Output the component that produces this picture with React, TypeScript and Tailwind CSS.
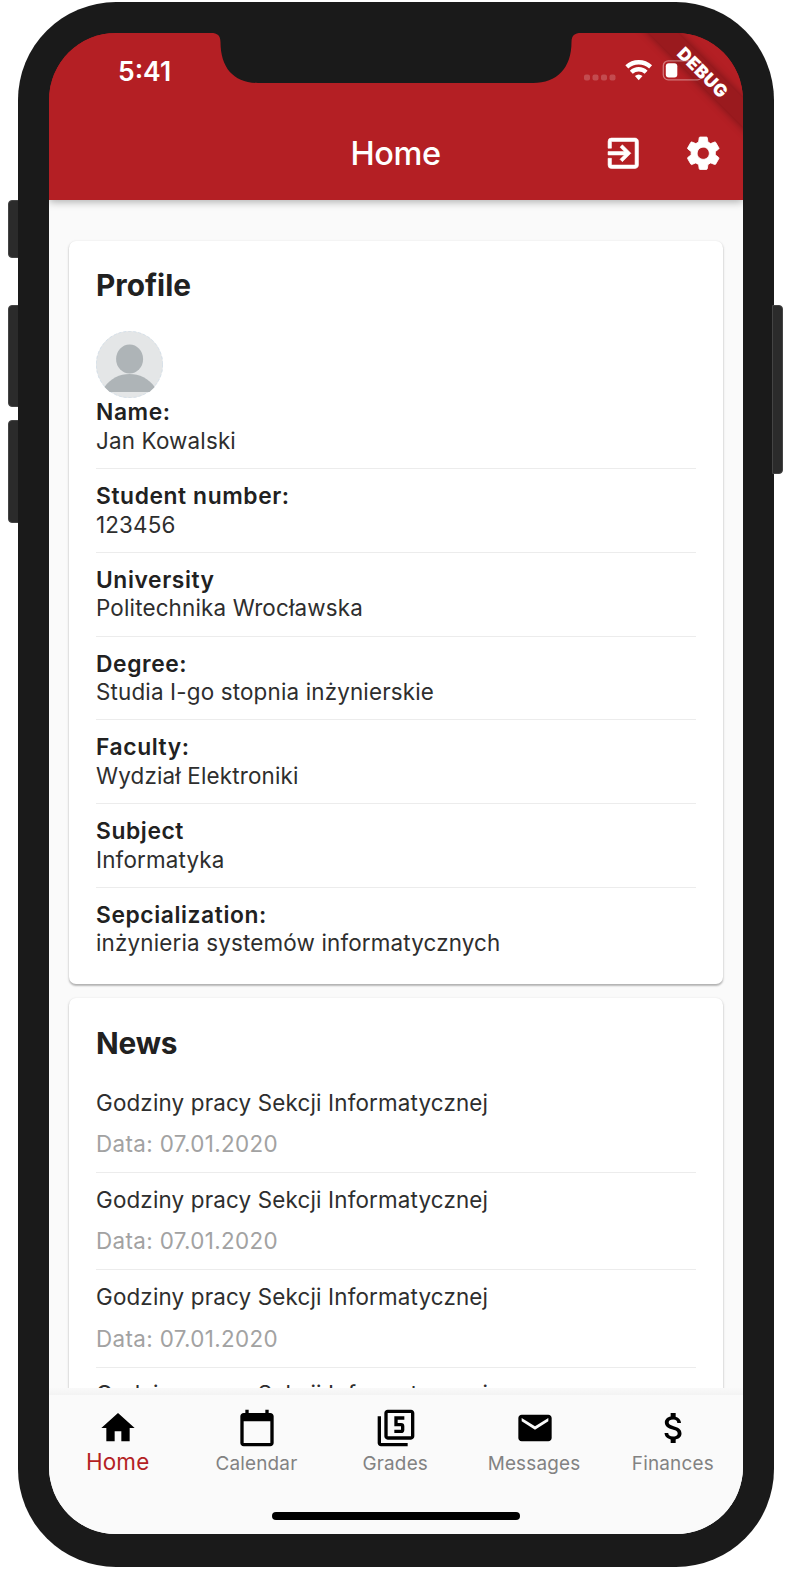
import React from "react";
import {
  MdHome,
  MdCalendarToday,
  MdFilter5,
  MdMail,
  MdAttachMoney,
  MdExitToApp,
  MdSettings,
} from "react-icons/md";

const profile = [
  ["Name:", "Jan Kowalski"],
  ["Student number:", "123456"],
  ["University", "Politechnika Wrocławska"],
  ["Degree:", "Studia I-go stopnia inżynierskie"],
  ["Faculty:", "Wydział Elektroniki"],
  ["Subject", "Informatyka"],
  ["Sepcialization:", "inżynieria systemów informatycznych"],
];

const news = [0, 1, 2, 3].map((id) => ({
  id,
  title: "Godziny pracy Sekcji Informatycznej",
  date: "Data: 07.01.2020",
}));

const tabs = [
  { label: "Home", Icon: MdHome },
  { label: "Calendar", Icon: MdCalendarToday },
  { label: "Grades", Icon: MdFilter5 },
  { label: "Messages", Icon: MdMail },
  { label: "Finances", Icon: MdAttachMoney },
];

function StatusBar() {
  return (
    <div className="flex h-[74px] items-center justify-between pt-[3px] pl-[69px]">
      <span className="text-[26.500px] font-semibold leading-none text-white">5:41</span>
      <svg className="h-[26px] w-[160px]" viewBox="583 59.500 160 26" fill="none">
        <g fill="#fff" fillOpacity="0.2">
          <rect x="584" y="75" width="6" height="6" rx="2" />
          <rect x="592.5" y="75" width="6" height="6" rx="2" />
          <rect x="601" y="75" width="6" height="6" rx="2" />
          <rect x="609.5" y="75" width="6" height="6" rx="2" />
        </g>
        <path
          d="M626.800 67.400a17.500 17.500 0 0 1 23.800 0M631.300 72.700a10.800 10.800 0 0 1 14.800 0"
          stroke="#fff"
          strokeWidth="4.300"
        />
        <path d="M634.900 76.600a5.700 5.700 0 0 1 7.600 0l-3.800 4.200z" fill="#fff" />
        <rect x="663.300" y="61.300" width="39" height="19" rx="5" stroke="#fff" strokeOpacity="0.4" strokeWidth="1.300" />
        <rect x="665.800" y="63.700" width="11.500" height="14.300" rx="3" fill="#fff" />
      </svg>
    </div>
  );
}

function Notch() {
  return (
    <svg className="absolute top-[-1px] left-[160px] h-[52px] w-[374px]" viewBox="209 32 374 52">
      <path
        d="M209 32V33H211C217.500 33 220.300 35.500 220.500 42C220.500 68 234 83 258 83H533C557 83 571.500 68 571.500 42C571.700 35.500 574.500 33 581 33H583V32Z"
        fill="#1a1a1a"
      />
    </svg>
  );
}

function SideButton({ className }: { className: string }) {
  return <div className={"absolute w-[11px] border border-[#444] bg-[#2b2b2b] " + className} />;
}

export default function App() {
  return (
    <div className="relative h-[1569px] w-[792px] overflow-hidden bg-white pt-[1.500px] pl-[18px] font-['Inter',sans-serif] text-[#212121]">
      <SideButton className="top-[200px] left-[8px] h-[58px] rounded-l-[4px]" />
      <SideButton className="top-[305px] left-[8px] h-[102px] rounded-l-[4px]" />
      <SideButton className="top-[420px] left-[8px] h-[103px] rounded-l-[4px]" />
      <div className="relative h-[1565px] w-[756px] rounded-[98px] bg-[#1a1a1a] pt-[31.500px] pl-[31px]">
        <div className="relative flex h-[1501px] w-[694px] flex-col overflow-hidden rounded-[67px] bg-[linear-gradient(#b41f24_160px,#fafafa_160px)]">
          <header className="relative z-10 h-[167.400px] shrink-0 bg-[#b41f24] shadow-[0_2px_8px_rgba(0,0,0,0.3)]">
            <div className="absolute top-[28.500px] left-[564px] flex h-[21px] w-[180px] rotate-45 items-center justify-center bg-[#9a1a1e] shadow-[0_0_9px_rgba(0,0,0,0.35)]">
              <span className="pt-[1px] text-[17.500px] font-black leading-none tracking-[0.500px] text-white">DEBUG</span>
            </div>
            <div className="relative">
              <StatusBar />
            </div>
            <Notch />
            <div className="grid grid-cols-[1fr_auto_1fr] items-center pt-[25.500px]">
              <span />
              <h1 className="pt-[0.500px] pr-[1px] text-[32.500px] font-medium leading-[41px] tracking-[-0.400px] text-white">Home</h1>
              <div className="flex justify-end gap-[39.500px] pr-[20px] text-[40.500px] text-white">
                <MdExitToApp className="[&>path:last-child]:stroke-white [&>path:last-child]:[stroke-width:0.35]" />
                <MdSettings className="[&>path:last-child]:stroke-white [&>path:last-child]:[stroke-width:0.5]" />
              </div>
            </div>
          </header>

          <main className="flex min-h-0 flex-1 flex-col gap-[13.700px] overflow-hidden bg-[#fafafa] px-[20px] pt-[40.300px]">
            <section className="h-[743.700px] shrink-0 rounded-[7px] bg-white px-[27px] pt-[26px] shadow-[0_1.700px_1.700px_rgba(0,0,0,0.2),0_1px_3px_rgba(0,0,0,0.16)]">
              <h2 className="text-[29.800px] font-bold leading-[37px]">Profile</h2>
              <svg className="mt-[27px] h-[67px] w-[67px]" viewBox="0 0 67 67">
                <circle cx="33.500" cy="33.500" r="33.500" fill="#e4e6e7" />
                <circle cx="33.500" cy="33.500" r="33.200" fill="none" stroke="#cddbe8" strokeWidth="0.700" strokeDasharray="3 2" />
                <ellipse cx="33.600" cy="28" rx="13.500" ry="14.500" fill="#aeb4b7" />
                <path d="M8.500 56C20 38.500 47 38.500 58.700 56L53.500 61H13.700Z" fill="#aeb4b7" />
              </svg>
              {profile.map(([label, value], i) => (
                <div
                  key={label}
                  className={
                    i === profile.length - 1
                      ? "pt-[13px] leading-[28.600px]"
                      : i === 0
                        ? "border-b border-[#ececec] pt-[0.300px] pb-[13px] leading-[28.600px]"
                        : "border-b border-[#ececec] pt-[13px] pb-[12.500px] leading-[28.600px]"
                  }
                >
                  <div className="text-[22.800px] font-semibold tracking-[0.600px]">{label}</div>
                  <div className="text-[22.400px] tracking-[0.170px] text-[#2e2e2e]">{value}</div>
                </div>
              ))}
            </section>

            <section className="shrink-0 rounded-[7px] bg-white px-[27px] pt-[26px] shadow-[0_1.700px_1.700px_rgba(0,0,0,0.2),0_1px_3px_rgba(0,0,0,0.16)]">
              <h2 className="pt-[1px] text-[29.800px] font-bold leading-[37px] tracking-[-0.200px]">News</h2>
              <div className="pt-[14px]">
                {news.map((item) => (
                  <article
                    key={item.id}
                    className="h-[97.200px] border-b border-[#ececec] pt-[12.500px] text-[22.400px] leading-[28.600px] tracking-[0.170px] text-[#2e2e2e]"
                  >
                    <div>{item.title}</div>
                    <div className="pt-[13px] tracking-[0.370px] text-[#a2a2a2]">{item.date}</div>
                  </article>
                ))}
              </div>
            </section>
          </main>

          <div className="h-[7px] shrink-0 bg-[linear-gradient(#f9f9f9,#f3f3f3)]" />
          <nav className="grid h-[139px] shrink-0 grid-cols-5 bg-[#fafafa] pt-[13px]">
            {tabs.map(({ label, Icon }, i) => (
              <div key={label} className="flex flex-col items-center">
                <Icon className="h-[40px] w-[40px] text-black" />
                <span
                  className={
                    i === 0
                      ? "pr-[1.500px] text-[22.400px] leading-[28px] tracking-[0.200px] text-[#b41f24]"
                      : "pt-[2px] pr-[1.500px] text-[18.900px] leading-[28px] tracking-[0.200px] text-[#828282]"
                  }
                >
                  {label}
                </span>
              </div>
            ))}
          </nav>
          <div className="absolute bottom-[14px] left-[223px] h-[8px] w-[248px] rounded-full bg-black" />
        </div>
      </div>
      <div className="absolute top-[305px] left-[772px] h-[169px] w-[11px] rounded-r-[4px] border border-[#444] bg-[#2b2b2b]" />
    </div>
  );
}
